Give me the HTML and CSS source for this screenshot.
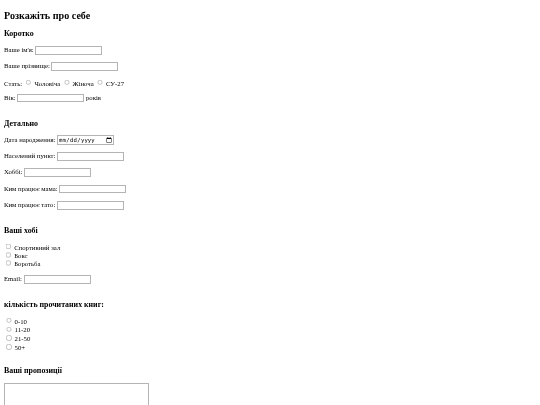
FILE: index.html
```html
<!DOCTYPE html>
<html lang="uk">
<head>
<meta charset="utf-8">
<title>Розкажіть про себе</title>
<link rel="stylesheet" href="styles.css">
</head>
<body class="page">
<h2 class="title">Розкажіть про себе</h2>
<form class="form">
  <h3 class="section">Коротко</h3>
  <p class="row">Ваше ім'я: <input class="field" type="text"></p>
  <p class="row">Ваше прізвище: <input class="field" type="text"></p>
  <p class="row">Стать:
    <input type="radio" name="sex" id="m"> <label for="m">Чоловіча</label>
    <input type="radio" name="sex" id="f"> <label for="f">Жіноча</label>
    <input type="radio" name="sex" id="s"> <label for="s">СУ-27</label>
  </p>
  <p class="row">Вік: <input class="field" type="text"> років</p>
  <h3 class="section spaced">Детально</h3>
  <p class="row">Дата народження: <input class="field date" type="date"></p>
  <p class="row">Населений пункт: <input class="field" type="text"></p>
  <p class="row">Хоббі: <input class="field" type="text"></p>
  <p class="row">Ким працює мама: <input class="field" type="text"></p>
  <p class="row">Ким працює тато: <input class="field" type="text"></p>
  <h3 class="section spaced">Ваші хобі</h3>
  <div class="list">
    <input type="checkbox" id="h1"> <label for="h1">Спортивний зал</label><br>
    <input type="checkbox" id="h2"> <label for="h2">Бокс</label><br>
    <input type="checkbox" id="h3"> <label for="h3">Боротьба</label>
  </div>
  <p class="row">Email: <input class="field" type="email"></p>
  <h3 class="section spaced">кількість прочитаних книг:</h3>
  <div class="list radios">
    <input type="radio" name="books" id="b1"> <label for="b1">0-10</label><br>
    <input type="radio" name="books" id="b2"> <label for="b2">11-20</label><br>
    <input type="radio" name="books" id="b3"> <label for="b3">21-50</label><br>
    <input type="radio" name="books" id="b4"> <label for="b4">50+</label>
  </div>
  <h3 class="section spaced wide">Ваші пропозиції</h3>
  <textarea class="notes" rows="10"></textarea>
</form>
</body>
</html>
```
FILE: styles.css
```css
html {
  zoom: 0.421875;
}
.page {
  margin: 8px 8px 8px 10px;
  font-family: "Liberation Serif", "Times New Roman", serif;
  font-size: 16px;
  color: #000;
  background: #fff;
  will-change: transform;
}
.title {
  font-size: 1.5em;
  margin: 16px 0 20px;
}
.section {
  font-size: 1.17em;
  margin: 1em 0;
}
.section.spaced {
  margin-top: 38px;
}
.section.wide {
  margin-top: 34px;
}
.row {
  margin: 17.5px 0;
}
.list {
  line-height: 18px;
}
.radios {
  line-height: 19px;
}
.field {
  width: 150px;
  border: 2px solid #b4b4b4;
}
.date {
  width: auto;
}
.notes {
  width: 334px;
  border: 2px solid #b4b4b4;
}
```
